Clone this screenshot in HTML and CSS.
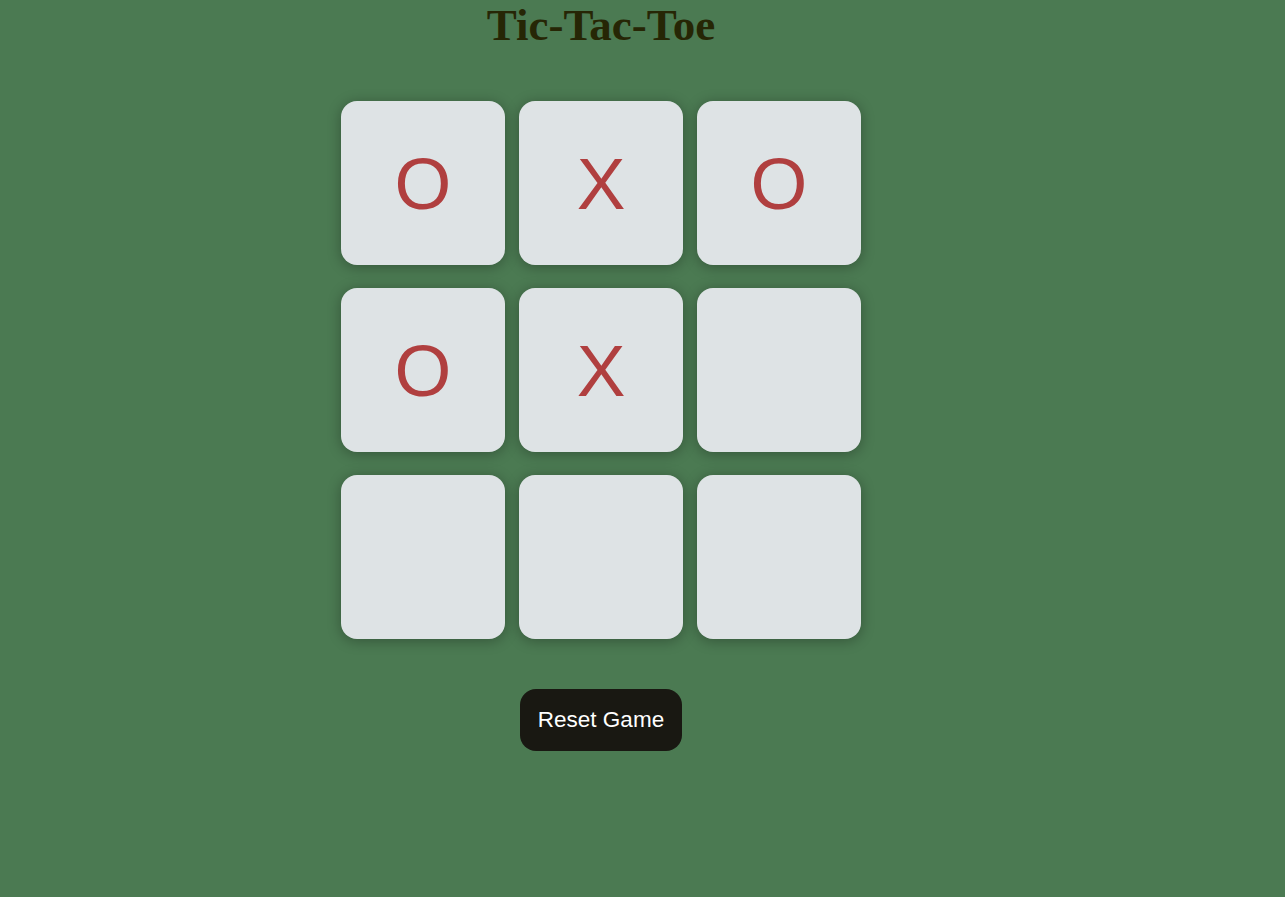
FILE: index.html
```html
<!DOCTYPE html>
<html lang="en">
<head>
<meta charset="utf-8">
<title>Tic-Tac-Toe</title>
<link rel="stylesheet" href="styles.css">
</head>
<body>
<main class="game">
  <h1 class="title">Tic-Tac-Toe</h1>
  <div class="board">
    <button class="cell">O</button>
    <button class="cell">X</button>
    <button class="cell">O</button>
    <button class="cell">O</button>
    <button class="cell">X</button>
    <button class="cell"></button>
    <button class="cell"></button>
    <button class="cell"></button>
    <button class="cell"></button>
  </div>
  <button class="reset">Reset Game</button>
</main>
</body>
</html>
```

FILE: styles.css
```css
html, body {
  margin: 0;
  padding: 0;
  background: #4b7a52;
  height: 100%;
}

.game {
  width: 1202px;
  display: flex;
  flex-direction: column;
  align-items: center;
}

.title {
  margin: -1px 0 0 0;
  font-family: "Liberation Serif", "Times New Roman", serif;
  font-weight: bold;
  font-size: 45px;
  line-height: 53px;
  color: #262605;
}

.board {
  margin-top: 49px;
  display: grid;
  grid-template-columns: repeat(3, 164px);
  grid-auto-rows: 164px;
  column-gap: 14px;
  row-gap: 23px;
}

.cell {
  border: none;
  padding: 0;
  margin: 0;
  border-radius: 16px;
  background: #dee3e5;
  box-shadow: 0 2px 14px rgba(0, 0, 0, 0.3);
  font-family: "Liberation Sans", Arial, sans-serif;
  font-size: 73px;
  color: #b03f3f;
  display: flex;
  align-items: center;
  justify-content: center;
  line-height: 1;
}

.reset {
  margin-top: 50px;
  width: 162px;
  height: 62px;
  border: none;
  border-radius: 16px;
  background: #191812;
  color: #ffffff;
  font-family: "Liberation Sans", Arial, sans-serif;
  font-size: 22.5px;
  padding: 0;
}
```
